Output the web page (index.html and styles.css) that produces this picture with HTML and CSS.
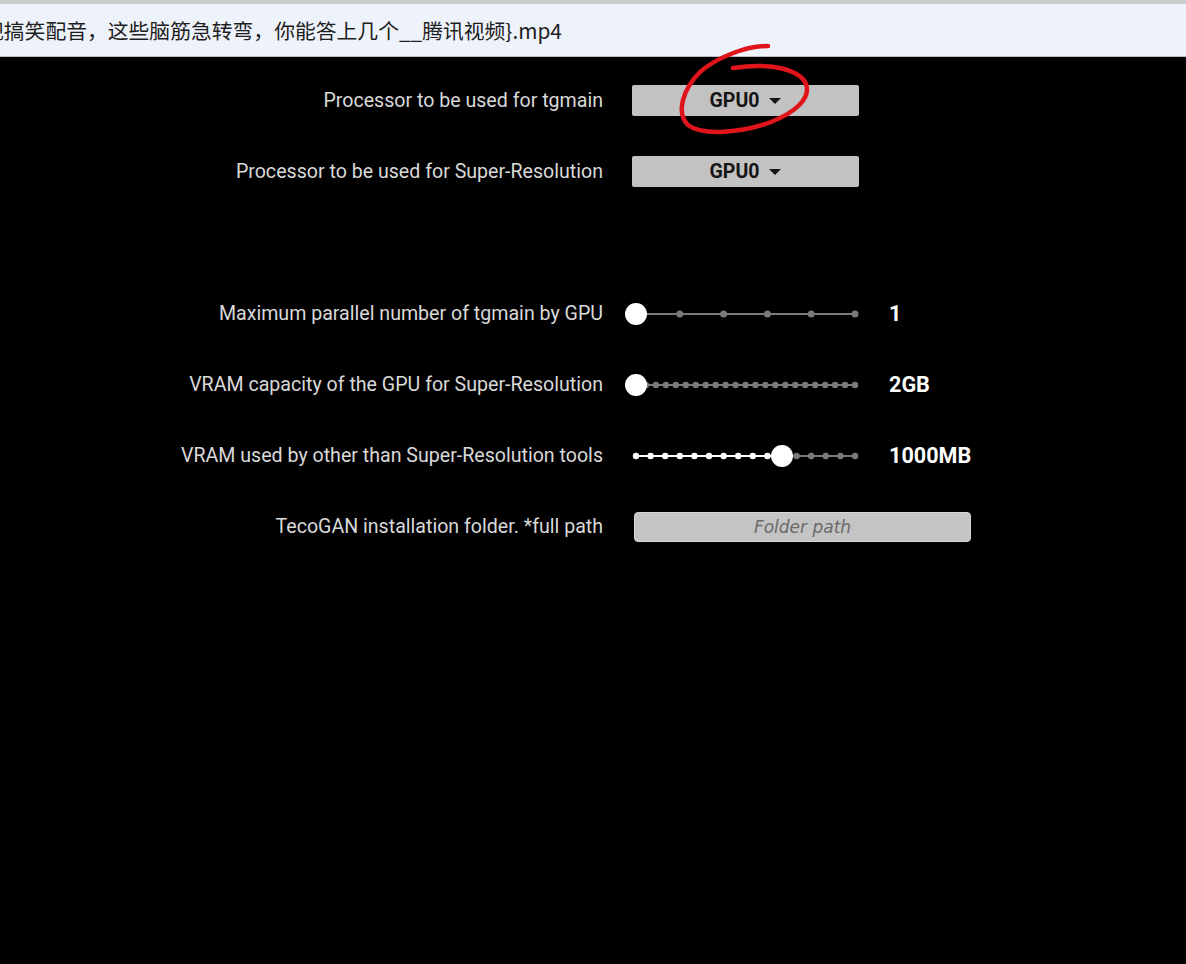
FILE: index.html
```html
<!DOCTYPE html>
<html lang="en">
<head>
    <meta charset="UTF-8">
    <title>TecoGAN settings</title>
    <link rel="stylesheet" href="styles.css">
</head>
<body>
    <!-- Window title strip -->
    <div class="titlebar">
        <span class="title">视搞笑配音，这些脑筋急转弯，你能答上几个__腾讯视频}.mp4</span>
    </div>

    <div class="page">
        <div class="settings">
            <label class="label">Processor to be used for tgmain</label>
            <div class="control">
                <button class="select">GPU0 <span class="caret"></span></button>
            </div>

            <label class="label">Processor to be used for Super-Resolution</label>
            <div class="control">
                <button class="select">GPU0 <span class="caret"></span></button>
            </div>

            <div class="spacer"></div>

            <label class="label">Maximum parallel number of tgmain by GPU</label>
            <div class="control">
                <svg class="slider" id="slider1" width="227" height="24"></svg>
                <span class="value">1</span>
            </div>

            <label class="label">VRAM capacity of the GPU for Super-Resolution</label>
            <div class="control">
                <svg class="slider" id="slider2" width="227" height="24"></svg>
                <span class="value">2GB</span>
            </div>

            <label class="label">VRAM used by other than Super-Resolution tools</label>
            <div class="control">
                <svg class="slider" id="slider3" width="227" height="24"></svg>
                <span class="value">1000MB</span>
            </div>

            <label class="label">TecoGAN installation folder. *full path</label>
            <div class="control">
                <input class="folder" type="text" placeholder="Folder path">
            </div>
        </div>

        <!-- hand-drawn red mark around the first dropdown -->
        <svg class="scribble" width="1186" height="200">
            <path d="M768,46 C745,46 716,58 700,72 C684,88 675,112 688,125 C702,136 742,133 771,122 C796,112 811,98 806,84 C800,70 772,62 733,68"
                  fill="none" stroke="#e0141b" stroke-width="4.5" stroke-linecap="round"/>
        </svg>
    </div>

    <script>
        // Draw a stepped slider: track, step dots and thumb
        function drawSlider(id, steps, current) {
            const svg = document.getElementById(id);
            const ns = 'http://www.w3.org/2000/svg';
            const left = 4, right = 223, y = 12;
            const gap = (right - left) / steps;
            const thumbX = left + gap * current;
            const dot = steps > 10 ? 3.2 : 3.5;

            const line = (x1, x2, color) => {
                const l = document.createElementNS(ns, 'line');
                l.setAttribute('x1', x1); l.setAttribute('x2', x2);
                l.setAttribute('y1', y); l.setAttribute('y2', y);
                l.setAttribute('stroke', color); l.setAttribute('stroke-width', 2);
                svg.appendChild(l);
            };
            const circle = (x, r, color) => {
                const c = document.createElementNS(ns, 'circle');
                c.setAttribute('cx', x); c.setAttribute('cy', y);
                c.setAttribute('r', r); c.setAttribute('fill', color);
                svg.appendChild(c);
            };

            line(left, thumbX, '#ffffff');
            line(thumbX, right, '#7a7a7a');
            for (let i = 0; i <= steps; i++) {
                circle(left + gap * i, dot, i < current ? '#ffffff' : '#7a7a7a');
            }
            circle(thumbX, 11, '#ffffff');
        }

        drawSlider('slider1', 5, 0);
        drawSlider('slider2', 22, 0);
        drawSlider('slider3', 15, 10);
    </script>
</body>
</html>
```

FILE: styles.css
```css
* {
    margin: 0;
    padding: 0;
    box-sizing: border-box;
}

body {
    background: #000;
    font-family: Roboto, 'Noto Sans', sans-serif;
    height: 964px;
    overflow: hidden;
}

.titlebar {
    height: 57px;
    background: #eef2fa;
    border-top: 4px solid #c9cbcf;
    border-bottom: 1px solid #b9bcc2;
    display: flex;
    align-items: center;
    overflow: hidden;
    white-space: nowrap;
}

.title {
    margin-left: -17px;
    font-family: "Noto Sans CJK SC", "Noto Sans", sans-serif;
    font-size: 20.8px;
    color: #1e1e1e;
}

.page {
    position: relative;
}

.settings {
    display: grid;
    grid-template-columns: 603px 1fr;
    grid-auto-rows: 71px;
    column-gap: 29px;
    align-items: center;
    padding-top: 8px;
}

.label {
    text-align: right;
    font-size: 19.6px;
    color: #d9d9d9;
}

.spacer {
    grid-column: 1 / 3;
}

.control {
    display: flex;
    align-items: center;
}

.select {
    width: 227px;
    height: 31px;
    background: #c2c2c2;
    border: none;
    border-radius: 2px;
    font-family: Roboto, sans-serif;
    font-weight: bold;
    font-size: 19.5px;
    color: #151515;
    display: flex;
    align-items: center;
    justify-content: center;
    gap: 10px;
}

.caret {
    width: 0;
    height: 0;
    border-left: 6px solid transparent;
    border-right: 6px solid transparent;
    border-top: 6px solid #151515;
}

.slider {
    overflow: visible;
}

.value {
    margin-left: 30px;
    font-size: 21.6px;
    font-weight: bold;
    color: #fff;
}

.folder {
    margin-left: 2px;
    width: 337px;
    height: 30px;
    background: #c4c4c4;
    border: 1px solid #d6d6d6;
    border-radius: 4px;
    text-align: center;
    font-family: 'DejaVu Sans', sans-serif;
    font-style: italic;
    font-size: 17px;
    outline: none;
}

.folder::placeholder {
    color: #6a6a6a;
}

.scribble {
    position: absolute;
    left: 0;
    top: -57px;
    pointer-events: none;
}
```
